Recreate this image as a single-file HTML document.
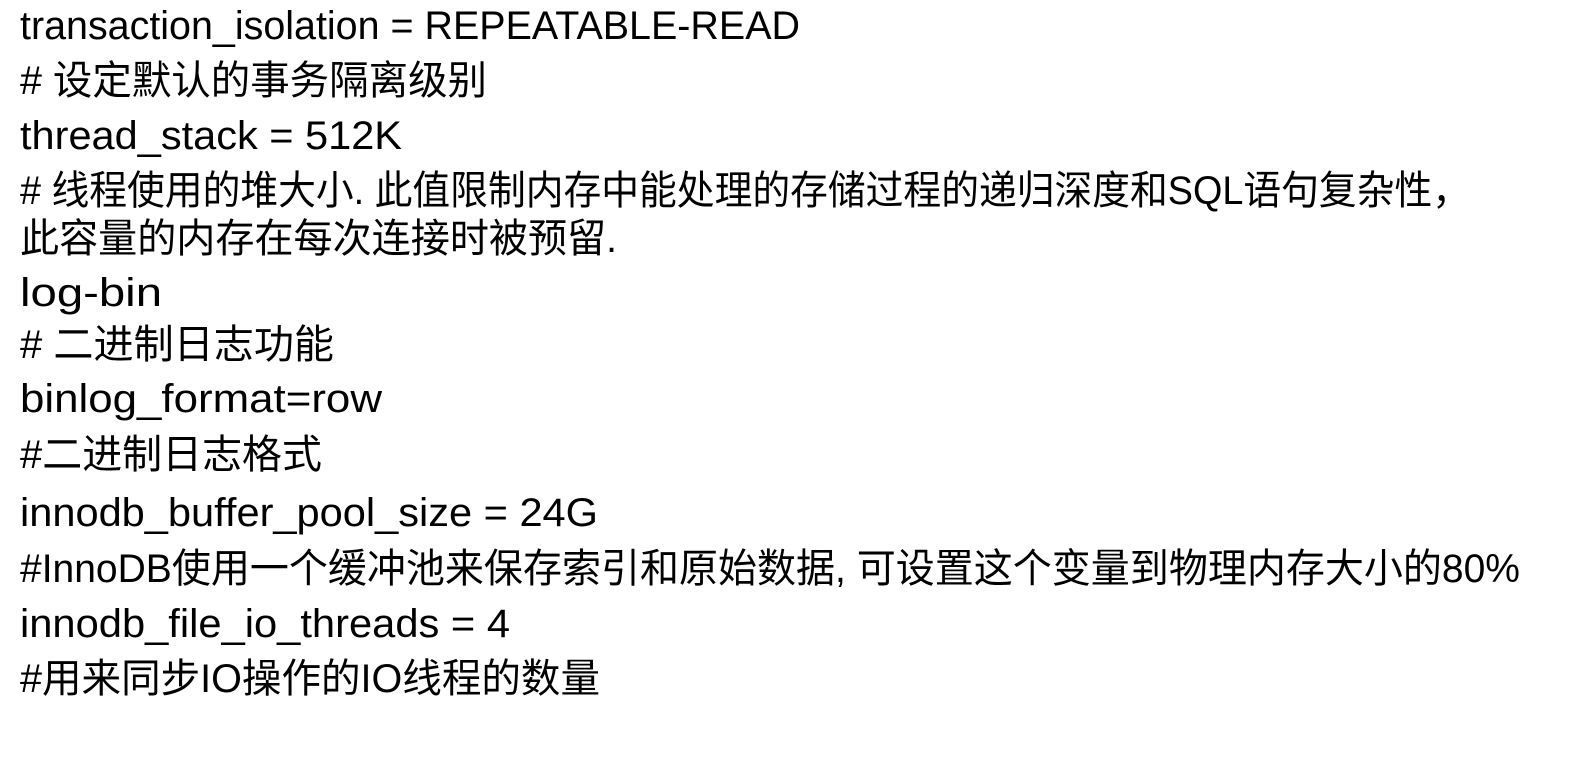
<!DOCTYPE html>
<html><head><meta charset="utf-8"><style>
html,body{margin:0;padding:0;background:#fff;width:1590px;height:762px;overflow:hidden}
.l{position:absolute;left:20px;height:50px;line-height:50px;font-size:40px;color:#000;white-space:nowrap;transform-origin:0 50%;font-family:"Liberation Sans","Noto Sans CJK SC",sans-serif}
</style></head><body>
<div class="l" data-w="780" style="top:1px">transaction_isolation = REPEATABLE-READ</div>
<div class="l" data-w="467" style="top:56px"># 设定默认的事务隔离级别</div>
<div class="l" data-w="382" style="top:111px">thread_stack = 512K</div>
<div class="l" data-w="1450" style="top:166px"># 线程使用的堆大小. 此值限制内存中能处理的存储过程的递归深度和SQL语句复杂性，</div>
<div class="l" data-w="597" style="top:214px">此容量的内存在每次连接时被预留.</div>
<div class="l" data-w="142" style="top:268px">log-bin</div>
<div class="l" data-w="314" style="top:320px"># 二进制日志功能</div>
<div class="l" data-w="362" style="top:374px">binlog_format=row</div>
<div class="l" data-w="302" style="top:430px">#二进制日志格式</div>
<div class="l" data-w="578" style="top:488px">innodb_buffer_pool_size = 24G</div>
<div class="l" data-w="1500" style="top:544px">#InnoDB使用一个缓冲池来保存索引和原始数据, 可设置这个变量到物理内存大小的80%</div>
<div class="l" data-w="490" style="top:599px">innodb_file_io_threads = 4</div>
<div class="l" data-w="580" style="top:654px">#用来同步IO操作的IO线程的数量</div>
<script>
document.querySelectorAll('.l').forEach(function(e){var w=e.getBoundingClientRect().width;var t=+e.getAttribute('data-w');if(w>0)e.style.transform='scaleX('+(t/w)+')';});
</script>
</body></html>
